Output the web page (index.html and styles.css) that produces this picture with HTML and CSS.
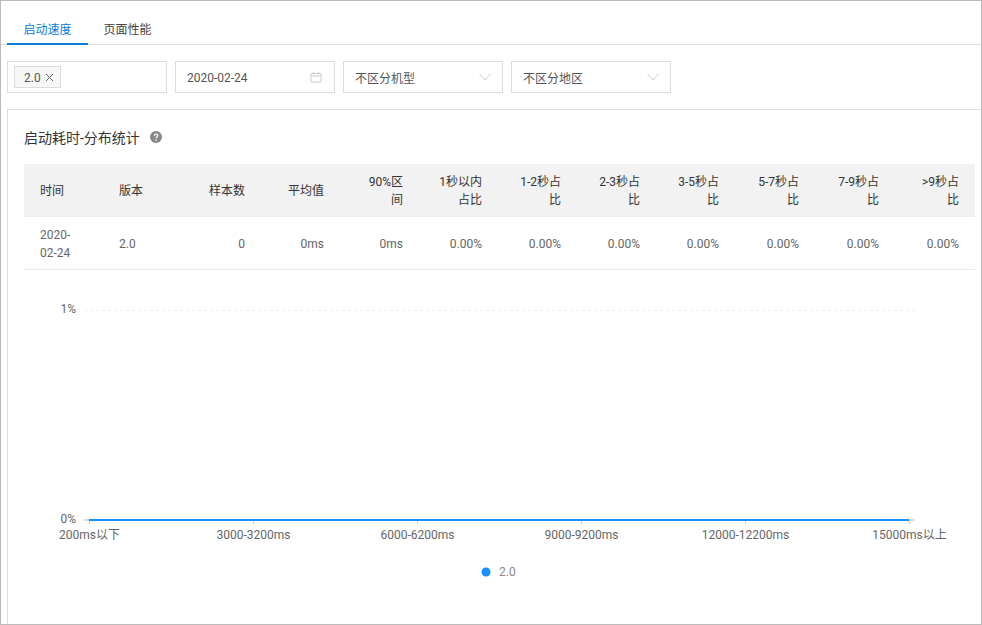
FILE: index.html
```html
<!DOCTYPE html>
<html lang="zh">
<head>
<meta charset="utf-8">
<title>启动速度</title>
<link rel="stylesheet" href="styles.css">
</head>
<body>
<div class="app">
  <nav class="tabs">
    <a class="tab active">启动速度</a>
    <a class="tab">页面性能</a>
  </nav>
  <div class="filters">
    <div class="field">
      <span class="tag"><span class="num">2.0</span>
        <svg class="tag-x" width="9" height="9" viewBox="0 0 9 9"><path d="M1 1l7 7M8 1L1 8" stroke="#666" fill="none"/></svg>
      </span>
    </div>
    <div class="field field-text">
      <span class="num">2020-02-24</span>
      <svg class="icon" width="12" height="12" viewBox="0 0 12 12"><path d="M1 2.500h10v8.500H1zM1 5h10M3.500 1v2M8.500 1v2" stroke="#ccc" fill="none"/></svg>
    </div>
    <div class="field field-text">
      <span>不区分机型</span>
      <svg class="chev" width="12" height="8" viewBox="0 0 12 8"><path d="M.5 1L6 7l5.500-6" stroke="#ccc" fill="none"/></svg>
    </div>
    <div class="field field-text">
      <span>不区分地区</span>
      <svg class="chev" width="12" height="8" viewBox="0 0 12 8"><path d="M.5 1L6 7l5.500-6" stroke="#ccc" fill="none"/></svg>
    </div>
  </div>
  <section class="card">
    <h2 class="title"><span class="title-text">启动耗时-分布统计</span>
      <svg class="help" width="12" height="12" viewBox="0 0 12 12"><circle cx="6" cy="6" r="6" fill="#888"/><path d="M4.300 4.700c0-2.200 3.500-2.200 3.500-.1 0 1.300-1.800 1.300-1.800 2.600" stroke="#fff" stroke-width="1.200" fill="none"/><circle cx="6" cy="9.100" r=".8" fill="#fff"/></svg>
    </h2>
    <table class="stats">
      <thead>
        <tr>
          <th class="left">时间</th><th class="left">版本</th><th>样本数</th><th>平均值</th><th>90%区<br>间</th><th>1秒以内占比</th><th>1-2秒占比</th><th>2-3秒占比</th><th>3-5秒占比</th><th>5-7秒占比</th><th>7-9秒占比</th><th>&gt;9秒占比</th>
        </tr>
      </thead>
      <tbody>
        <tr>
          <td class="left">2020-02-24</td><td class="left">2.0</td><td>0</td><td>0ms</td><td>0ms</td><td>0.00%</td><td>0.00%</td><td>0.00%</td><td>0.00%</td><td>0.00%</td><td>0.00%</td><td>0.00%</td>
        </tr>
      </tbody>
    </table>
    <svg class="chart" width="951" height="340" viewBox="24 270 951 340">
      <line x1="84" y1="310.500" x2="915" y2="310.500" stroke="#eee" stroke-dasharray="3 3"/>
      <line x1="84" y1="520" x2="915" y2="520" stroke="#ddd" stroke-width="2"/>
      <path d="M89.500 520v4M253.500 520v4M417.500 520v4M581.500 520v4M745.500 520v4M909.500 520v4" stroke="#ccc"/>
      <line x1="89" y1="520" x2="909" y2="520" stroke="#1890ff" stroke-width="2"/>
      <g class="axis">
        <text x="76" y="313" text-anchor="end">1%</text>
        <text x="76" y="523" text-anchor="end">0%</text>
        <text x="89.500" y="539" text-anchor="middle">200ms以下</text>
        <text x="253.500" y="539" text-anchor="middle">3000-3200ms</text>
        <text x="417.500" y="539" text-anchor="middle">6000-6200ms</text>
        <text x="581.500" y="539" text-anchor="middle">9000-9200ms</text>
        <text x="745.500" y="539" text-anchor="middle">12000-12200ms</text>
        <text x="909.500" y="539" text-anchor="middle">15000ms以上</text>
        <circle cx="486" cy="572" r="4.500" fill="#1890ff"/>
        <text class="legend" x="499" y="576">2.0</text>
      </g>
    </svg>
  </section>
</div>
</body>
</html>
```

FILE: styles.css
```css
* { box-sizing: border-box; }
html, body { margin: 0; padding: 0; background: #fff; }
body {
  font-family: Roboto, "Noto Sans CJK SC", sans-serif;
  font-size: 12px;
  font-weight: 300;
  color: #555;
}
.app {
  width: 982px;
  height: 625px;
  border: 1px solid #bbb;
  overflow: hidden;
  background: #fff;
}
.tabs {
  display: flex;
  height: 44px;
  padding-left: 6px;
  border-bottom: 1px solid #ddd;
}
.tab {
  width: 81px;
  padding-top: 21px;
  height: 44px;
  line-height: 17px;
  text-align: center;
  color: #444;
  font-weight: 400;
}
.tab + .tab { width: 79px; }
.tab.active {
  color: #0a7bd6;
  border-bottom: 2px solid #0a7bd6;
}
.filters {
  display: flex;
  gap: 8px;
  padding: 16px 0 0 6px;
}
.field {
  width: 160px;
  height: 32px;
  border: 1px solid #ddd;
  display: flex;
  align-items: center;
  padding: 0 4px;
}
.field-text {
  justify-content: space-between;
  padding: 0 11px;
  font-weight: 400;
  color: #555;
}
.num { padding-top: 1px; }
.tag {
  display: inline-flex;
  align-items: center;
  gap: 5px;
  width: 47px;
  height: 22px;
  padding: 0 5px 0 9px;
  margin-left: 2px;
  border: 1px solid #ddd;
  background: #f7f7f7;
  font-weight: 400;
}
.tag-x { margin-left: -1px; }
.icon { margin-right: 1px; }
.card {
  margin: 16px 0 0 6px;
  width: 1000px;
  height: 560px;
  padding: 0 0 0 16px;
  border: 1px solid #ddd;
  border-right: 0;
}
.title {
  margin: 0;
  padding-top: 18px;
  height: 54px;
  font-size: 14px;
  font-weight: 400;
  line-height: 20px;
  color: #333;
  display: flex;
  align-items: flex-start;
}
.title-text { width: 118px; }
.help { margin: 3px 0 0 8px; }
.stats {
  width: 951px;
  table-layout: fixed;
  border-collapse: separate;
  border-spacing: 0;
}
.stats th, .stats td {
  width: 79px;
  padding: 9px 16px 7px;
  line-height: 18px;
  text-align: right;
  font-weight: 400;
}
.stats th:nth-child(n+10) { width: 80px; }
.stats th {
  background: #f2f2f2;
  color: #333;
  border-bottom: 1px solid #eee;
}
.stats td {
  color: #666;
  border-bottom: 1px solid #e8e8e8;
}
.stats .left { text-align: left; }
.chart { display: block; }
.axis text { font-size: 12px; fill: #666; font-weight: 400; font-family: Roboto, "Noto Sans CJK SC", sans-serif; }
.axis .legend { fill: #888; }
```
